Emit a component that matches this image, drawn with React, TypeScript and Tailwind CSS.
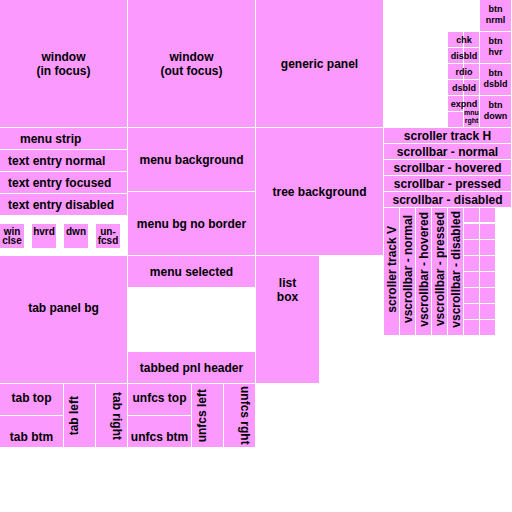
import type { ReactNode } from "react";

const center = "items-center justify-center text-center";

function Cell({ className = center, children }: { className?: string; children?: ReactNode }) {
  return (
    <div className={`flex border-r border-b border-white bg-[#fb99ff] whitespace-pre ${className}`}>{children}</div>
  );
}

function Vertical({ down = false, children }: { down?: boolean; children: ReactNode }) {
  return <span className={down ? "[writing-mode:vertical-rl]" : "rotate-180 [writing-mode:vertical-rl]"}>{children}</span>;
}

function TextButton({ children }: { children: ReactNode }) {
  return (
    <button className="h-8 border-r border-b border-white bg-[#fb99ff] pb-px text-center text-[9px] leading-[11px] font-bold whitespace-pre">
      {children}
    </button>
  );
}

function TogglePair({ label, open = false }: { label: string; open?: boolean }) {
  return (
    <div className="relative grid h-4 grid-cols-2">
      <Cell />
      <Cell className={open ? "border-b-0" : ""} />
      <span className="absolute inset-0 flex items-center justify-center text-[9px] leading-[11px]">{label}</span>
    </div>
  );
}

function TabSet({ top, bottom, left, right }: { top: string; bottom: string; left: string; right: string }) {
  return (
    <div className="grid h-16 grid-cols-4">
      <div className="col-span-2 grid grid-rows-2">
        <Cell className="items-center justify-center pb-1">{top}</Cell>
        <Cell className="items-end justify-center pb-[3px]">{bottom}</Cell>
      </div>
      <Cell className="items-center pl-[3px]"><Vertical>{left}</Vertical></Cell>
      <Cell className="items-center justify-end pr-[3px]"><Vertical down>{right}</Vertical></Cell>
    </div>
  );
}

const windowButtons = ["win\nclse", "hvrd", "dwn", "un-\nfcsd"];
const toggles = ["chk", "disbld", "rdio", "dsbld"];
const buttons = ["btn\nnrml", "btn\nhvr", "btn\ndsbld", "btn\ndown"];
const horizontal = ["scroller track H", "scrollbar - normal", "scrollbar - hovered", "scrollbar - pressed", "scrollbar - disabled"];
const vertical = ["scroller track V", "vscrollbar - normal", "vscrollbar - hovered", "vscrollbar - pressed", "vscrollbar - disabled"];

export default function App() {
  return (
    <main className="min-h-screen bg-white font-['Liberation_Sans',Arial,sans-serif] text-[12px] leading-[14px] font-bold text-black">
      <div className="grid grid-cols-4 items-start">
        <section className="flex flex-col">
          <Cell className={`h-32 ${center}`}>{"window\n(in focus)"}</Cell>
          <Cell className="h-[22px] items-center pl-5">menu strip</Cell>
          <Cell className="h-[22px] items-center pl-2">text entry normal</Cell>
          <Cell className="h-[22px] items-center pl-2">text entry focused</Cell>
          <Cell className="h-[22px] items-center pl-2">text entry disabled</Cell>
          <div className="grid h-10 grid-cols-4 items-center">
            {windowButtons.map((label) => (
              <button key={label} className="mr-2 flex h-6 items-start justify-center bg-[#fb99ff] pt-[3px] text-center text-[10px] leading-[9px] font-bold whitespace-pre">
                {label}
              </button>
            ))}
          </div>
          <Cell className="h-32 items-center justify-center pb-6">tab panel bg</Cell>
          <TabSet top="tab top" bottom="tab btm" left="tab left" right="tab right" />
        </section>

        <section className="flex flex-col">
          <Cell className={`h-32 ${center}`}>{"window\n(out focus)"}</Cell>
          <Cell className={`h-16 ${center}`}>menu background</Cell>
          <Cell className={`h-16 ${center}`}>menu bg no border</Cell>
          <Cell className={`mb-16 h-8 ${center}`}>menu selected</Cell>
          <Cell className={`h-8 ${center}`}>tabbed pnl header</Cell>
          <TabSet top="unfcs top" bottom="unfcs btm" left="unfcs left" right="unfcs rght" />
        </section>

        <section className="flex flex-col">
          <Cell className={`h-32 ${center}`}>generic panel</Cell>
          <Cell className={`h-32 ${center}`}>tree background</Cell>
          <Cell className="h-32 w-1/2 justify-center pt-5 text-center">{"list\nbox"}</Cell>
        </section>

        <section className="flex flex-col">
          <div className="grid h-32 grid-cols-4">
            <div className="col-span-2 col-start-3 grid grid-cols-2">
              <div className="flex flex-col pt-8">
                {toggles.map((label) => (
                  <TogglePair key={label} label={label} />
                ))}
                <TogglePair label="expnd" open />
                <div className="grid h-4 grid-cols-2">
                  <Cell />
                  <Cell className="relative justify-center">
                    <span className="absolute -top-[3px] text-center text-[7px] leading-[8px]">{"mnu\nrght"}</span>
                  </Cell>
                </div>
              </div>
              <div className="flex flex-col">
                {buttons.map((label) => (
                  <TextButton key={label}>{label}</TextButton>
                ))}
              </div>
            </div>
          </div>
          {horizontal.map((label) => (
            <Cell key={label} className={`h-4 ${center}`}>{label}</Cell>
          ))}
          <div className="grid h-32 grid-cols-8">
            {vertical.map((label) => (
              <Cell key={label} className="items-center justify-center pb-1"><Vertical>{label}</Vertical></Cell>
            ))}
            <div className="col-span-2 grid grid-cols-2 grid-rows-8">
              {Array.from({ length: 16 }, (_, i) => (
                <Cell key={i} className={i < 2 ? "border-b-2" : ""} />
              ))}
            </div>
          </div>
        </section>
      </div>
    </main>
  );
}
